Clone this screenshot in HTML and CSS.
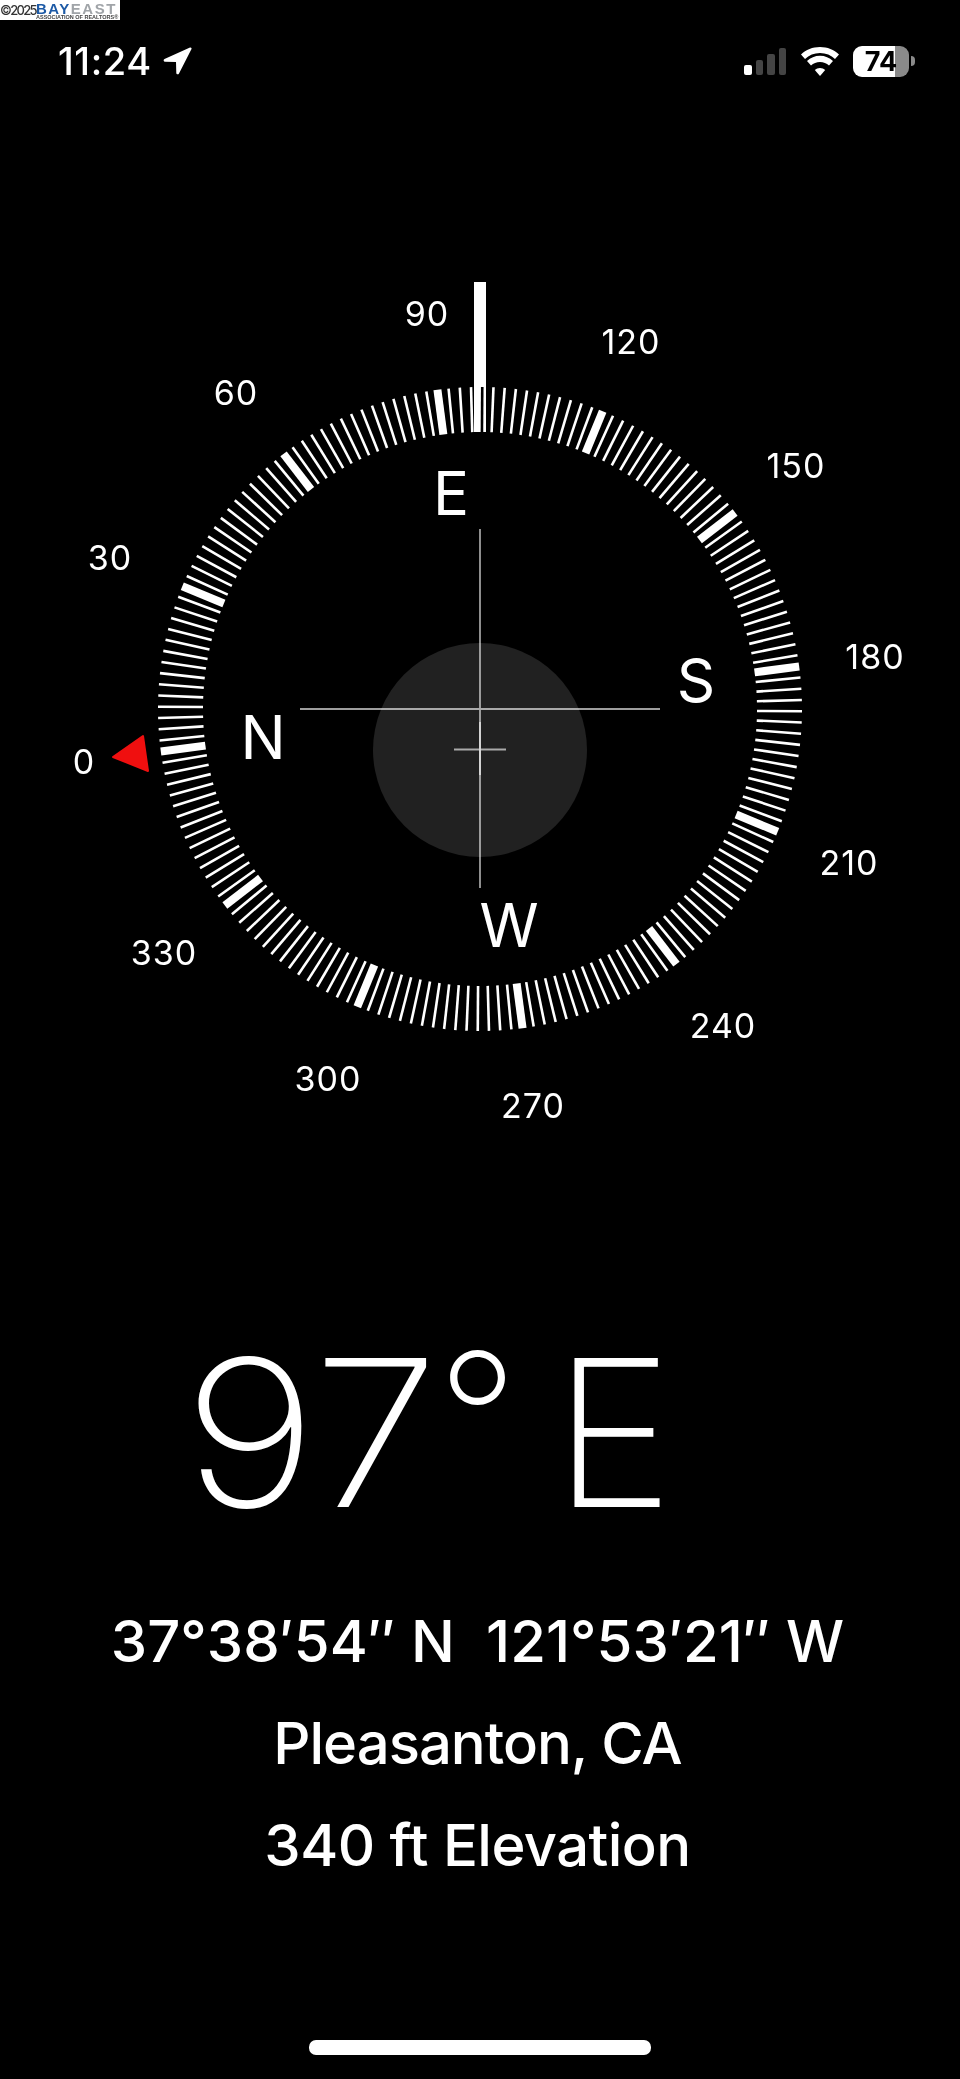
FILE: index.html
```html
<!DOCTYPE html>
<html lang="en">
<head>
    <meta charset="UTF-8">
    <meta name="viewport" content="width=device-width, initial-scale=1.0">
    <title>Compass</title>
    <link rel="stylesheet" href="styles.css">
</head>
<body>
    <div class="screen">
        <div class="stamp">
            <span class="stamp-year">©2025</span>
            <div class="stamp-logo">
                <div class="stamp-name"><span class="bay">BAY</span><span class="east">EAST</span></div>
                <div class="stamp-sub">ASSOCIATION OF REALTORS®</div>
            </div>
        </div>

        <div class="status-bar">
            <div class="status-left">
                <span class="time">11:24</span>
                <svg class="location" viewBox="0 0 30 30">
                    <path d="M28 1.500 2.500 13c-1.500.7-1 2.700.6 2.700l10.900.2.300 11c0 1.600 2.100 2 2.700.5L29.500 3c.4-1-.5-1.900-1.500-1.500z"/>
                </svg>
            </div>
            <div class="status-right">
                <div class="signal">
                    <span class="bar bar-on"></span>
                    <span class="bar bar-2"></span>
                    <span class="bar bar-3"></span>
                    <span class="bar bar-4"></span>
                </div>
                <svg class="wifi" viewBox="0 0 40 29">
                    <path d="M20 6c6 0 11 2.300 15 6l4-4.500C34 2.700 27.400 0 20 0S6 2.700 1 7.500L5 12c4-3.700 9-6 15-6z"/>
                    <path d="M20 15c3.500 0 6.600 1.300 9 3.500l4-4.500c-3.500-3.200-8-5.200-13-5.200S10.500 10.800 7 14l4 4.500c2.400-2.200 5.500-3.500 9-3.500z"/>
                    <path d="M20 21c-2 0-3.800.8-5.200 2L20 29l5.200-6c-1.400-1.200-3.200-2-5.200-2z"/>
                </svg>
                <div class="battery">
                    <div class="battery-body">74</div>
                    <span class="battery-nub"></span>
                </div>
            </div>
        </div>

        <div class="dial">
            <svg class="dial-svg" viewBox="0 0 960 860">
                <circle class="level" cx="480" cy="470" r="107"/>
                <path class="cross" d="M300 429H660M480 249V608"/>
                <path class="cross" d="M454 469.500H506M480 442V495"/>
                <g id="ticks"></g>
                <rect class="heading-bar" x="474" y="2" width="12" height="150"/>
                <path class="red-mark" d="M113 477 143 456 148 491Z"/>

                <text class="degree" x="427" y="33">90</text>
                <text class="degree" x="631" y="61">120</text>
                <text class="degree" x="796" y="185">150</text>
                <text class="degree" x="875" y="376">180</text>
                <text class="degree" x="849" y="582">210</text>
                <text class="degree" x="723" y="745">240</text>
                <text class="degree" x="533" y="825">270</text>
                <text class="degree" x="328" y="798">300</text>
                <text class="degree" x="164" y="672">330</text>
                <text class="degree" x="84" y="481">0</text>
                <text class="degree" x="110" y="277">30</text>
                <text class="degree" x="236" y="112">60</text>

                <text class="cardinal" x="451" y="213">E</text>
                <text class="cardinal" x="696" y="400">S</text>
                <text class="cardinal" x="509" y="645">W</text>
                <text class="cardinal" x="263" y="457">N</text>
            </svg>
        </div>

        <div class="heading">
            <span class="heading-digits">97</span>
            <span class="heading-degree">°</span>
            <span class="heading-letter">E</span>
        </div>

        <div class="details">
            <div class="details-row details-coords">37°38′54″ N&nbsp;&nbsp;121°53′21″ W</div>
            <div class="details-row details-city">Pleasanton, CA</div>
            <div class="details-row">340 ft Elevation</div>
        </div>

        <div class="home-indicator"></div>
    </div>
    <script src="script.js"></script>
</body>
</html>
```

FILE: styles.css
```css
* {
    box-sizing: border-box;
}
html, body {
    margin: 0;
    background-color: #000;
}
body {
    font-family: Inter, 'Noto Sans', sans-serif;
    color: #fff;
}
.screen {
    position: relative;
    width: 960px;
    height: 2079px;
    overflow: hidden;
    background-color: #000;
}

/* watermark in the corner */
.stamp {
    position: absolute;
    top: 0;
    left: 0;
    width: 120px;
    height: 20px;
    display: flex;
    background-color: #fff;
}
.stamp-year {
    width: 36px;
    font-size: 13px;
    font-weight: 500;
    line-height: 20px;
    letter-spacing: -1.7px;
    color: #333;
    white-space: nowrap;
}
.stamp-logo {
    width: 84px;
}
.stamp-name {
    font-family: 'Liberation Sans', sans-serif;
    font-size: 15px;
    font-weight: bold;
    line-height: 17px;
    letter-spacing: 1.5px;
}
.bay {
    color: #1d5aa6;
}
.east {
    color: #a0a4a8;
}
.stamp-sub {
    margin-top: -3px;
    font-family: 'Liberation Sans', sans-serif;
    font-size: 5.5px;
    font-weight: bold;
    line-height: 6px;
    white-space: nowrap;
    color: #444;
}

.status-bar {
    position: absolute;
    top: 45px;
    left: 58px;
    right: 45px;
    height: 32px;
    display: flex;
    justify-content: space-between;
    align-items: center;
}
.status-left {
    display: flex;
    align-items: center;
    gap: 10px;
}
.time {
    font-size: 38px;
    font-weight: 500;
    line-height: 32px;
    letter-spacing: 0.6px;
}
.location {
    width: 30px;
    height: 30px;
    fill: #fff;
}
.status-right {
    display: flex;
    align-items: center;
}
.signal {
    display: flex;
    align-items: flex-end;
    gap: 4px;
    height: 27px;
}
.bar {
    width: 7.5px;
    border-radius: 2px;
    background-color: #444;
}
.bar-on {
    height: 10px;
    background-color: #fff;
}
.bar-2 {
    height: 15px;
}
.bar-3 {
    height: 21px;
}
.bar-4 {
    height: 27px;
}
.wifi {
    width: 40px;
    height: 29px;
    margin-left: 14px;
    fill: #fff;
}
.battery {
    display: flex;
    align-items: center;
    margin-left: 13px;
}
.battery-body {
    width: 56px;
    height: 31px;
    border-radius: 9px;
    background: linear-gradient(to right, #fff 75%, #8a8a8a 75%);
    color: #000;
    font-size: 27px;
    font-weight: 700;
    line-height: 31px;
    text-align: center;
}
.battery-nub {
    width: 4px;
    height: 10px;
    margin-left: 2px;
    border-radius: 0 5px 5px 0;
    background-color: #8a8a8a;
}

.dial {
    position: absolute;
    top: 280px;
    left: 0;
    width: 960px;
    height: 860px;
}
.dial-svg {
    display: block;
    width: 960px;
    height: 860px;
}
.level {
    fill: #212121;
}
.cross {
    fill: none;
    stroke: #fff;
    stroke-opacity: 0.62;
    stroke-width: 1.8;
}
.tick {
    stroke: #fff;
    stroke-width: 2.6;
}
.tick-major {
    stroke-width: 8;
}
.heading-bar {
    fill: #fff;
    mix-blend-mode: difference;
}
.red-mark {
    fill: #f00f0f;
    stroke: #f00f0f;
    stroke-width: 2;
    stroke-linejoin: round;
}
.degree {
    fill: #fff;
    font-size: 34px;
    font-weight: 400;
    letter-spacing: 1px;
    text-anchor: middle;
    dominant-baseline: central;
}
.cardinal {
    fill: #fff;
    font-size: 60px;
    font-weight: 400;
    text-anchor: middle;
    dominant-baseline: central;
}

.heading {
    position: absolute;
    top: 1308px;
    left: 0;
    width: 960px;
    padding-left: 183px;
    display: flex;
    font-size: 205px;
    font-weight: 200;
    line-height: 248px;
    white-space: nowrap;
}
.heading-digits {
    width: 254px;
    transform: scaleX(1.12);
    transform-origin: left;
}
.heading-degree {
    width: 116px;
    transform: scale(0.87);
    transform-origin: left top;
}
.heading-letter {
    width: 120px;
}
.details {
    position: absolute;
    top: 1590px;
    left: 0;
    width: 960px;
    padding-right: 5px;
    text-align: center;
}
.details-row {
    height: 102px;
    font-size: 58px;
    font-weight: 450;
    line-height: 102px;
    letter-spacing: -0.55px;
    white-space: nowrap;
}
.details-coords {
    letter-spacing: 0.05px;
}
.details-city {
    letter-spacing: -1px;
}
.home-indicator {
    position: absolute;
    top: 2040px;
    left: 309px;
    width: 342px;
    height: 15px;
    border-radius: 7px;
    background-color: #fff;
}
```

FILE: script.js
```js
// dial ticks, one every 2 degrees, thick one every 30
const ticks = document.getElementById('ticks');
const heading = 97.6;

for (let deg = 0; deg < 360; deg += 2) {
    const rad = (deg - heading) * Math.PI / 180;
    const line = document.createElementNS('http://www.w3.org/2000/svg', 'line');
    line.setAttribute('x1', 480 + 277 * Math.sin(rad));
    line.setAttribute('y1', 429 - 277 * Math.cos(rad));
    line.setAttribute('x2', 480 + 322 * Math.sin(rad));
    line.setAttribute('y2', 429 - 322 * Math.cos(rad));
    line.setAttribute('class', deg % 30 === 0 ? 'tick tick-major' : 'tick');
    ticks.appendChild(line);
}
```
